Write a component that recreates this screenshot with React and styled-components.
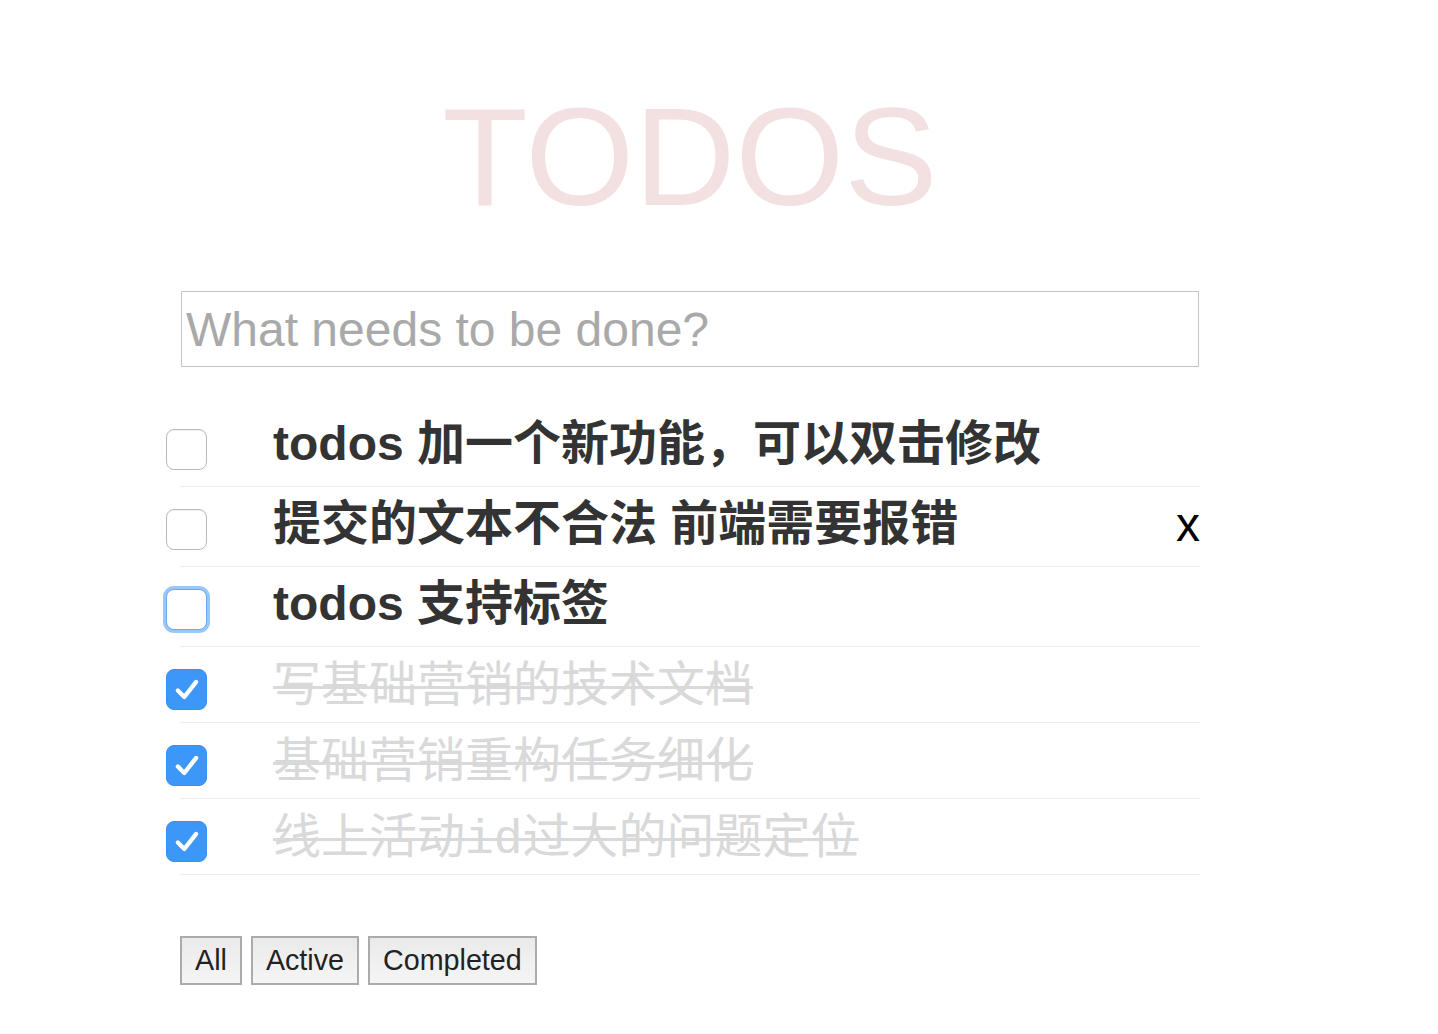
import React from "react";
import styled, { createGlobalStyle, css } from "styled-components";

const Global = createGlobalStyle`
  html, body { margin: 0; padding: 0; background: #fff; }
  body { font-family: "Liberation Sans", "Noto Sans CJK SC", sans-serif; color: #333; }
`;

const Page = styled.div`
  width: 1020px;
  padding: 77px 0 40px 180px;
`;

const Title = styled.h1`
  margin: 0;
  font-size: 140px;
  line-height: 160px;
  font-weight: 400;
  text-align: center;
  color: rgba(175, 47, 47, 0.15);
  font-family: "Liberation Sans", Arial, sans-serif;
`;

const NewTodo = styled.input`
  display: block;
  box-sizing: border-box;
  margin: 54px 0 0 1px;
  width: 1018px;
  height: 76px;
  border: 1px solid #c4c4c4;
  padding: 0 4px;
  font-size: 48px;
  font-family: "Liberation Sans", Arial, sans-serif;
  color: #333;
  outline: none;
  &::placeholder { color: #a9a9a9; }
`;

const List = styled.ul`
  list-style: none;
  margin: 40px 0 0 0;
  padding: 0;
`;

const Row = styled.li`
  display: flex;
  align-items: center;
  box-sizing: border-box;
  height: ${(p) => (p.$done ? 76 : 80)}px;
  border-bottom: 1px solid #ececec;
`;

const Box = styled.span`
  flex: none;
  box-sizing: border-box;
  width: 41px;
  height: 41px;
  margin-left: -14px;
  margin-top: ${(p) => (p.$checked ? 10 : 5)}px;
  border-radius: 8px;
  display: flex;
  align-items: center;
  justify-content: center;
  ${(p) =>
    p.$checked
      ? css`
          background: #3c97f8;
          border: 1px solid #3a90f2;
        `
      : css`
          background: #fff;
          border: 1.5px solid #bababa;
          box-shadow: inset 0 1px 1px rgba(0, 0, 0, 0.06);
        `}
  ${(p) =>
    p.$focus &&
    css`
      border: 1.5px solid #6ea7ec;
      box-shadow: 0 0 0 3px rgba(120, 180, 250, 0.75);
    `}
`;

const Label = styled.span`
  margin-left: 66px;
  font-size: 48px;
  line-height: 56px;
  white-space: nowrap;
  ${(p) =>
    p.$done
      ? css`
          padding-top: 6px;
          color: #d9d9d9;
          font-weight: 400;
          text-decoration: line-through;
          text-decoration-thickness: 3px;
          font-family: "Liberation Mono", "Noto Sans CJK SC", monospace;
        `
      : css`
          padding-bottom: 5px;
          color: #333;
          font-weight: 700;
          font-family: "Liberation Sans", "Noto Sans CJK SC", sans-serif;
        `}
`;

const Destroy = styled.button`
  margin-left: auto;
  margin-right: 0;
  margin-bottom: 4px;
  border: none;
  background: none;
  padding: 0;
  font-size: 48px;
  line-height: 48px;
  font-family: "Liberation Sans", Arial, sans-serif;
  color: #000;
  cursor: pointer;
`;

const Filters = styled.div`
  display: flex;
  gap: 9px;
  margin-top: 61px;
`;

const FilterButton = styled.button`
  box-sizing: border-box;
  height: 49px;
  padding: 0 13px;
  border: 2px solid #ababab;
  background: linear-gradient(#eaeaea, #f5f5f5);
  font-size: 28.7px;
  font-family: "Liberation Sans", Arial, sans-serif;
  color: #222;
  border-radius: 0;
`;

const Check = () => (
  <svg width="28" height="28" viewBox="0 0 26 26" fill="none">
    <path
      d="M4.5 13.5 L10.5 19.5 L21.5 5.5"
      stroke="#fff"
      strokeWidth="4"
      strokeLinecap="round"
      strokeLinejoin="round"
    />
  </svg>
);

const todos = [
  { text: "todos 加一个新功能，可以双击修改", done: false },
  { text: "提交的文本不合法 前端需要报错", done: false, hover: true },
  { text: "todos 支持标签", done: false, focus: true },
  { text: "写基础营销的技术文档", done: true },
  { text: "基础营销重构任务细化", done: true },
  { text: "线上活动id过大的问题定位", done: true },
];

export default function App() {
  return (
    <>
      <Global />
      <Page>
        <Title>TODOS</Title>
        <NewTodo placeholder="What needs to be done?" />
        <List>
          {todos.map((t, i) => (
            <Row key={i} $done={t.done}>
              <Box $checked={t.done} $focus={t.focus}>
                {t.done && <Check />}
              </Box>
              <Label $done={t.done}>{t.text}</Label>
              {t.hover && <Destroy>x</Destroy>}
            </Row>
          ))}
        </List>
        <Filters>
          <FilterButton>All</FilterButton>
          <FilterButton>Active</FilterButton>
          <FilterButton>Completed</FilterButton>
        </Filters>
      </Page>
    </>
  );
}
